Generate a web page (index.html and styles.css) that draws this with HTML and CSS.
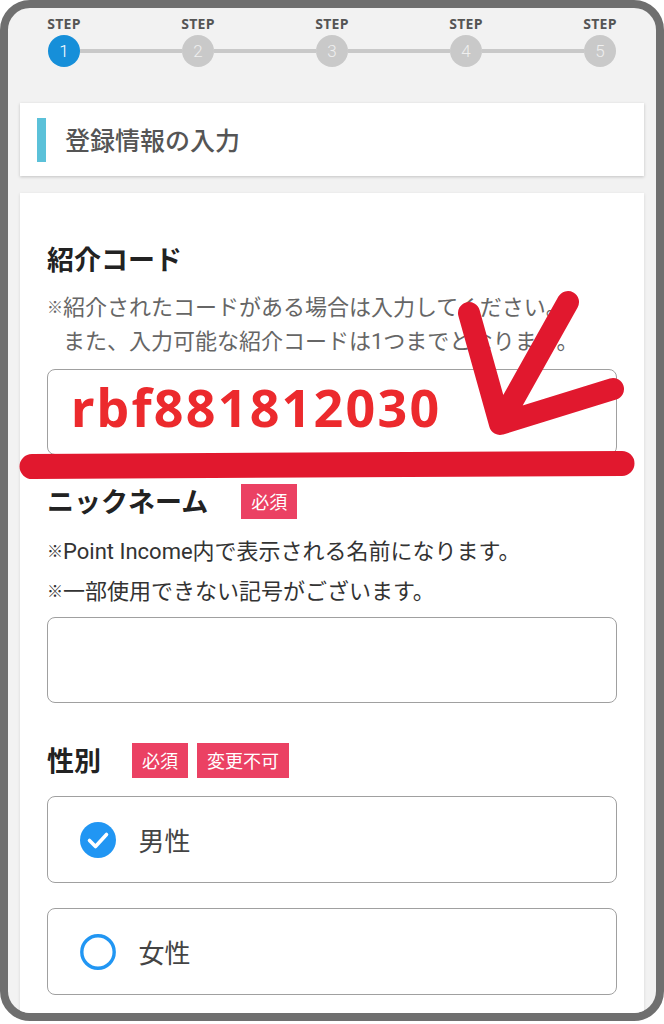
FILE: index.html
```html
<!DOCTYPE html>
<html lang="ja">
<head>
<meta charset="utf-8">
<title>登録情報の入力</title>
<link rel="stylesheet" href="styles.css">
</head>
<body>
<div class="frame">
  <div class="steps">
    <div class="step active"><span class="step-label">STEP</span><span class="step-num">1</span></div>
    <div class="connector"></div>
    <div class="step"><span class="step-label">STEP</span><span class="step-num">2</span></div>
    <div class="connector"></div>
    <div class="step"><span class="step-label">STEP</span><span class="step-num">3</span></div>
    <div class="connector"></div>
    <div class="step"><span class="step-label">STEP</span><span class="step-num">4</span></div>
    <div class="connector"></div>
    <div class="step"><span class="step-label">STEP</span><span class="step-num">5</span></div>
  </div>

  <div class="page-title">
    <span class="title-bar"></span>
    <h1>登録情報の入力</h1>
  </div>

  <div class="form-card">
    <div class="field-head"><h2>紹介コード</h2></div>
    <p class="note note-muted"><span class="kome">※</span>紹介されたコードがある場合は入力してください。<br>また、入力可能な紹介コードは1つまでとなります。</p>
    <div class="text-box code-box"><span class="code">rbf881812030</span></div>

    <div class="field-head nick-head"><h2>ニックネーム</h2><span class="badge badge-nick">必須</span></div>
    <p class="note note-first"><span class="kome">※</span>Point Income内で表示される名前になります。</p>
    <p class="note note-second"><span class="kome">※</span>一部使用できない記号がございます。</p>
    <div class="text-box nick-box"></div>

    <div class="field-head gender-head"><h2>性別</h2><span class="badge">必須</span><span class="badge badge-next">変更不可</span></div>
    <div class="option option-first">
      <svg class="radio" width="36" height="36" viewBox="0 0 36 36"><circle cx="18" cy="18" r="18" fill="#2196f3"/><path d="M9.5 18.5 L15.5 24.5 L26.5 12.5" fill="none" stroke="#fff" stroke-width="3.6" stroke-linecap="round" stroke-linejoin="round"/></svg>
      <span class="option-text">男性</span>
    </div>
    <div class="option option-second">
      <svg class="radio" width="36" height="36" viewBox="0 0 36 36"><circle cx="18" cy="18" r="16.2" fill="none" stroke="#2196f3" stroke-width="3.4"/></svg>
      <span class="option-text">女性</span>
    </div>
  </div>
</div>

<svg class="annotation" width="664" height="1024" viewBox="0 0 664 1024">
  <path d="M32 466.5 L622 463.5" fill="none" stroke="#e1182e" stroke-width="25" stroke-linecap="round"/>
  <path d="M469 313 L500 424 L613 389 M568 302 L503 418" fill="none" stroke="#e1182e" stroke-width="22" stroke-linecap="round" stroke-linejoin="round"/>
</svg>
</body>
</html>
```

FILE: styles.css
```css
html, body {
  margin: 0;
  padding: 0;
  background: #ffffff;
}

body {
  position: relative;
  width: 664px;
  height: 1024px;
  overflow: hidden;
  font-family: "Noto Sans CJK JP", "Noto Sans", sans-serif;
}

.frame {
  box-sizing: border-box;
  width: 664px;
  height: 1021px;
  border: 8px solid #6f6f6f;
  border-radius: 30px;
  background: #f2f2f2;
  overflow: hidden;
}

/* stepper */
.steps {
  display: flex;
  align-items: flex-end;
  padding: 8px 40px 0;
}

.step {
  flex: none;
  width: 32px;
  display: flex;
  flex-direction: column;
  align-items: center;
}

.step-label {
  font-family: "Open Sans", "Noto Sans", sans-serif;
  font-weight: 700;
  font-size: 14px;
  line-height: 16px;
  letter-spacing: 0.3px;
  color: #555;
  margin-bottom: 3px;
  white-space: nowrap;
}

.step-num {
  width: 32px;
  height: 32px;
  border-radius: 50%;
  background: #c9c9c9;
  color: #efefef;
  font-family: Roboto, sans-serif;
  font-weight: 300;
  font-size: 17px;
  line-height: 32px;
  text-align: center;
}

.step.active .step-num {
  background: #168fd9;
  color: #ffffff;
}

.connector {
  flex: 1;
  height: 4px;
  margin-bottom: 14px;
  background: #c9c9c9;
}

/* page title */
.page-title {
  display: flex;
  align-items: center;
  height: 73px;
  margin: 36px 12px 0;
  padding-left: 17px;
  background: #ffffff;
  box-shadow: 0 1px 3px rgba(0, 0, 0, 0.2);
}

.title-bar {
  width: 9px;
  height: 44px;
  background: #5bc1d9;
  margin-right: 19px;
}

.page-title h1 {
  margin: 0;
  font-size: 25px;
  line-height: 1;
  font-weight: 500;
  color: #555;
}

/* form card */
.form-card {
  margin: 17px 12px 0;
  padding: 48px 27px 40px;
  background: #ffffff;
  box-shadow: 0 1px 3px rgba(0, 0, 0, 0.12);
}

.field-head {
  display: flex;
  align-items: center;
  height: 36px;
}

.field-head h2 {
  margin: 0;
  font-size: 27px;
  line-height: 36px;
  font-weight: 700;
  color: #222;
}

.badge {
  margin-left: 31px;
  padding: 0 10px;
  height: 35px;
  line-height: 35px;
  font-size: 18px;
  color: #ffffff;
  background: #eb4163;
}

.badge.badge-nick {
  margin-left: 33px;
}

.badge.badge-next {
  margin-left: 9px;
}

.note {
  margin: 0;
  padding-left: 16px;
  text-indent: -16px;
  font-family: Roboto, "Noto Sans CJK JP", sans-serif;
  font-size: 22px;
  line-height: 34px;
  color: #333;
}

.note-muted {
  margin-top: 14px;
  color: #666;
}

.kome {
  font-family: "Noto Sans CJK JP", sans-serif;
  font-size: 16px;
  line-height: 1;
  vertical-align: 2px;
}

.text-box {
  box-sizing: border-box;
  height: 86px;
  border: 1.5px solid #a0a0a0;
  border-radius: 8px;
  background: #ffffff;
}

.code-box {
  margin-top: 10px;
  display: flex;
  align-items: center;
  padding-left: 23px;
}

.code {
  font-family: "Noto Sans", sans-serif;
  font-weight: 700;
  font-size: 52px;
  line-height: 52px;
  letter-spacing: 2.2px;
  color: #ec2a2d;
  margin-bottom: 10px;
}

.nick-head {
  margin-top: 28px;
}

.note-first {
  margin-top: 16px;
}

.note-second {
  margin-top: 6px;
}

.nick-box {
  margin-top: 8px;
}

.gender-head {
  margin-top: 39px;
}

.option {
  box-sizing: border-box;
  display: flex;
  align-items: center;
  height: 87px;
  padding-left: 31.5px;
  border: 1.5px solid #a0a0a0;
  border-radius: 8px;
}

.option-first {
  margin-top: 18px;
}

.option-second {
  margin-top: 25px;
}

.radio {
  flex: none;
  display: block;
}

.option-text {
  margin-left: 23px;
  font-size: 26px;
  line-height: 36px;
  color: #444;
}

/* hand-drawn annotation overlay */
.annotation {
  position: absolute;
  left: 0;
  top: 0;
  pointer-events: none;
}
```
